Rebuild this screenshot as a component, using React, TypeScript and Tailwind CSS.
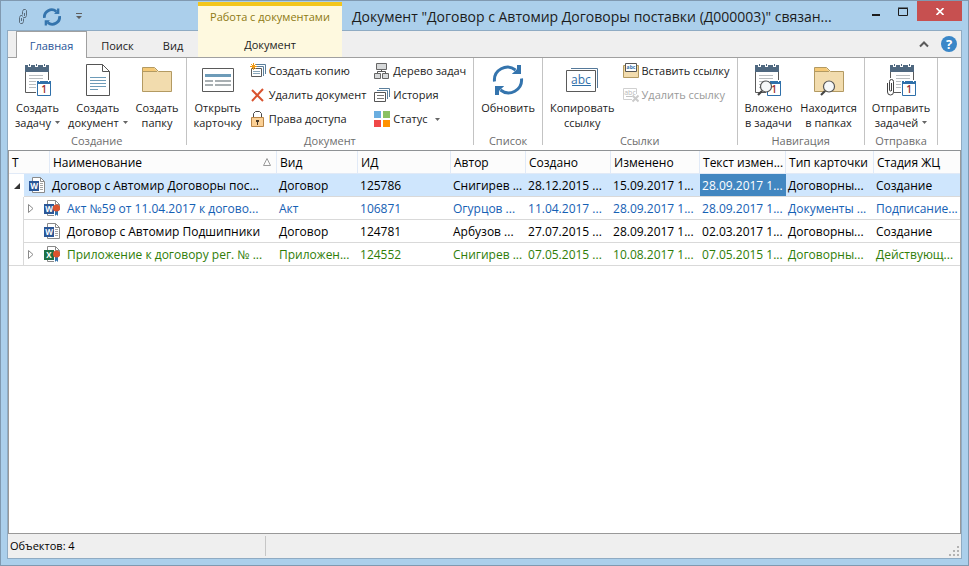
import React, { useState } from 'react';
import clsx from 'clsx';

interface DocumentRow {
  name: string;
  kind: string;
  id: string;
  author: string;
  created: string;
  changed: string;
  textChanged: string;
  cardType: string;
  stage: string;
  app: 'word' | 'excel';
  signed?: boolean;
  child?: boolean;
  expandable?: boolean;
  selected?: boolean;
  color: string;
}

const rows: DocumentRow[] = [
  {
    name: 'Договор с Автомир Договоры пос...', kind: 'Договор', id: '125786', author: 'Снигирев ...',
    created: '28.12.2015 ...', changed: '15.09.2017 1...', textChanged: '28.09.2017 1...',
    cardType: 'Договорны...', stage: 'Создание', app: 'word', selected: true, color: 'text-black',
  },
  {
    name: 'Акт №59 от 11.04.2017 к догово...', kind: 'Акт', id: '106871', author: 'Огурцов ...',
    created: '11.04.2017 ...', changed: '28.09.2017 1...', textChanged: '28.09.2017 1...',
    cardType: 'Документы ...', stage: 'Подписание...', app: 'word', signed: true, child: true,
    expandable: true, color: 'text-[#1560b4]',
  },
  {
    name: 'Договор с Автомир Подшипники', kind: 'Договор', id: '124781', author: 'Арбузов ...',
    created: '27.07.2015 ...', changed: '28.09.2017 1...', textChanged: '02.03.2017 1...',
    cardType: 'Договорны...', stage: 'Создание', app: 'word', child: true, color: 'text-black',
  },
  {
    name: 'Приложение к договору рег. № ...', kind: 'Приложен...', id: '124552', author: 'Снигирев ...',
    created: '07.05.2015 ...', changed: '10.08.2017 1...', textChanged: '07.05.2015 1...',
    cardType: 'Договорны...', stage: 'Действующ...', app: 'excel', signed: true, child: true,
    expandable: true, color: 'text-[#2f7d08]',
  },
];

const columns = ['Вид', 'ИД', 'Автор', 'Создано', 'Изменено', 'Текст измен...', 'Тип карточки', 'Стадия ЖЦ'];

/* ---------- Icons ---------- */

const RefreshIcon = ({ size, weight = 3 }: { size: number; weight?: number }) => (
  <svg width={size} height={size} viewBox="0 0 32 32">
    <path d="M2.500 17.500A13 13 0 0 1 23.500 6" fill="none" stroke="#3474ad" strokeWidth={weight} />
    <path d="M29.500 14.500A13 13 0 0 1 8.500 26" fill="none" stroke="#3474ad" strokeWidth={weight} />
    <path d="M25 1h4v9H20l5-4zM7 31H3v-9h9l-5 4z" fill="#3474ad" />
    <path d="M20 10l5-5 4 5zM12 22l-5 5-4-5z" fill="#3474ad" />
  </svg>
);

const LinkIcon = () => (
  <svg width="10" height="16" viewBox="0 0 10 16" fill="none" stroke="#5b6d7d">
    <path d="M3.500 5.500v-3l1-2h2l1 1v5l-1 2h-2l-1-1" />
    <path d="M3.500 6.500h-2l-1 2v5l1 1h2l1-2v-3M5.500 4v3M2.500 9v3" />
  </svg>
);

const SmallCalendar = () => (
  <g>
    <path d="M12.500 17.500h13v14h-13z" fill="#fff" stroke="#2f70aa" />
    <path d="M12 17h14v3H12z" fill="#2f70aa" />
    <path d="M14 17h1v1h-1zM23 17h1v1h-1z" fill="#fff" />
    <text x="19" y="29" fontSize="10" fontWeight="600" textAnchor="middle" fill="#a02c2c">1</text>
  </g>
);

const SheetBase = ({ lineStart }: { lineStart: number }) => (
  <g>
    <path d="M.5 6.500h23v22H.5z" fill="#fff" stroke="#5a5a5a" />
    <path d="M0 1h24v7H0z" fill="#4f6880" />
    <path d="M3 0h3v3H3zM10 0h3v3h-3zM18 0h3v3h-3z" fill="#fff" />
    <path d="M4 0h1v2H4zM11 0h1v2h-1zM19 0h1v2h-1z" fill="#4f6880" />
    <path d={`M${lineStart} 11.500h14M${lineStart} 14.500h14M${lineStart} 17.500h8M${lineStart} 20.500h7M${lineStart} 23.500h7`} stroke="#b9bdc0" />
    <path d="M11 16h15v16H11z" fill="#fff" />
    <SmallCalendar />
  </g>
);

const Magnifier = ({ x, y }: { x: number; y: number }) => (
  <g transform={`translate(${x} ${y})`}>
    <circle cx="9" cy="6.500" r="5.500" fill="#f6f8f9" stroke="#555" strokeWidth="1.200" />
    <path d="M5 11l-4 4" stroke="#444" strokeWidth="2.200" />
  </g>
);

const TaskIcon = () => (
  <svg width="26" height="32" viewBox="0 0 26 32">
    <SheetBase lineStart={4} />
  </svg>
);

const TaskSearchIcon = () => (
  <svg width="26" height="32" viewBox="0 0 26 32">
    <SheetBase lineStart={4} />
    <Magnifier x={2} y={16} />
  </svg>
);

const SendTaskIcon = () => (
  <svg width="30" height="32" viewBox="-4 0 30 32">
    <SheetBase lineStart={6} />
    <path d="M-4 14h8v18h-8z" fill="#fff" />
    <path d="M1.500 19v8M-2.500 19v9a3 3 0 0 0 6 0V17.500a2 2 0 0 0-4 0V26a1 1 0 0 0 2 0" fill="none" stroke="#444" />
  </svg>
);

const DocumentIcon = () => (
  <svg width="24" height="32" viewBox="0 0 24 32">
    <path d="M.5.500h16l7 7v24H.5z" fill="#fff" stroke="#555" />
    <path d="M16.500.500v7h7" fill="none" stroke="#555" />
    <path d="M4 13.500h16M4 16.500h16M4 19.500h16M4 22.500h16M4 25.500h8" stroke="#6d9bb8" />
  </svg>
);

const FolderIcon = ({ search }: { search?: boolean }) => (
  <svg width="30" height="32" viewBox="0 0 30 32">
    <path d="M.5 8V3.500h12l4 4h13v20H.5z" fill="#f2dcae" stroke="#b39a62" />
    <path d="M1 4h11l3 3.500H1z" fill="#f5c976" />
    <path d="M1 7.500h14" stroke="#b39a62" />
    {search && <Magnifier x={6} y={16} />}
  </svg>
);

const CardIcon = () => (
  <svg width="32" height="32" viewBox="0 0 32 32">
    <path d="M.5 4.500h31v23H.5z" fill="#fff" stroke="#5a5a5a" />
    <path d="M3 10h26v3H3z" fill="#6d9bb8" />
    <path d="M3 16h8v2H3zM13 16h16v2H13zM3 20h8v2H3zM13 20h16v2H13z" fill="#a8afb2" />
  </svg>
);

const CopyLinkIcon = () => (
  <svg width="32" height="32" viewBox="0 0 32 32">
    <path d="M5 4.500h26.500V24" fill="none" stroke="#55799a" />
    <path d="M.5 6.500h29v21H.5z" fill="#fff" stroke="#5a5a5a" />
    <text x="15" y="20" fontSize="12" textAnchor="middle" fill="#2f70aa">abc</text>
    <path d="M6 21.500h19" stroke="#2f70aa" />
  </svg>
);

const CopyIcon = () => (
  <svg width="16" height="16" viewBox="0 0 16 16">
    <path d="M6 1.500h9.500V11M5 3.500h8.500V13" fill="none" stroke="#5b7f9c" />
    <path d="M1.500 5.500h10v8h-10z" fill="#fff" stroke="#5a5a5a" />
    <path d="M3 8.500h7M3 10.500h7" stroke="#8aa7ba" />
    <path d="M3.500 0v7M0 3.500h7M1 1l5 5M6 1L1 6" stroke="#f39a12" />
  </svg>
);

const DeleteIcon = () => (
  <svg width="16" height="16" viewBox="0 0 16 16">
    <path d="M2 3l11 11M13 2L2 14" stroke="#d9532f" strokeWidth="2" />
  </svg>
);

const LockIcon = () => (
  <svg width="16" height="16" viewBox="0 0 16 16">
    <path d="M3.500 6V2.500l2-2h4l2 2V6" fill="none" stroke="#4a4a4a" />
    <path d="M1.500 6.500h12v9h-12z" fill="#fbd095" stroke="#b98547" />
    <path d="M6 9h3v2H8v3H7v-3H6z" fill="#4a3a28" />
  </svg>
);

const TreeIcon = () => (
  <svg width="16" height="16" viewBox="0 0 16 16">
    <path d="M7.500 7v2M3.500 11V8.500h8V11" fill="none" stroke="#555" />
    <path d="M2.500.500h10v6h-10zM.5 10.500h6v5h-6zM8.500 10.500h6v5h-6z" fill="#d7d9da" stroke="#666" />
  </svg>
);

const HistoryIcon = () => (
  <svg width="16" height="16" viewBox="0 0 16 16">
    <path d="M5 1.500h10.500V10M3 3.500h10.500V12" fill="none" stroke="#5b7f9c" />
    <path d="M.5 5.500h11v9H.5z" fill="#fff" stroke="#555" />
    <path d="M3 8.500h7M3 11.500h7" stroke="#777" />
  </svg>
);

const StatusIcon = () => (
  <svg width="16" height="16" viewBox="0 0 16 16">
    <path d="M0 0h7v7H0z" fill="#6aaee0" />
    <path d="M9 0h7v7H9z" fill="#8ac162" />
    <path d="M0 9h7v7H0z" fill="#f04848" />
    <path d="M9 9h7v7H9z" fill="#ff9100" />
  </svg>
);

const PasteLinkIcon = () => (
  <svg width="16" height="16" viewBox="0 0 16 16">
    <path d="M.5 2.500h15v12H.5z" fill="#f5d99b" stroke="#b39a62" />
    <path d="M2.500.500h11v8h-11z" fill="#fff" stroke="#555" />
    <text x="8" y="6" fontSize="5" fontWeight="bold" textAnchor="middle" fill="#2f70aa">abc</text>
    <path d="M1 9h14v5H1z" fill="#f2dcae" />
  </svg>
);

const DeleteLinkIcon = () => (
  <svg width="16" height="16" viewBox="0 0 16 16">
    <path d="M9 12.500H.5v-11h13V7" fill="none" stroke="#d0d0d0" />
    <text x="7" y="8" fontSize="7" textAnchor="middle" fill="#b8b8b8">abc</text>
    <path d="M3 9.500h6" stroke="#c4c4c4" />
    <path d="M9.500 8.500l6 6M15.500 8.500l-6 6" stroke="#cbcbcb" strokeWidth="2" />
  </svg>
);

const FileIcon = ({ app, signed }: { app: 'word' | 'excel'; signed?: boolean }) => {
  const color = app === 'word' ? '#2b5797' : '#1e7145';
  return (
    <svg width="16" height="16" viewBox="0 0 16 16" className="shrink-0">
      <path d="M3.500.500h8l4 4v11h-12z" fill="#fff" stroke="#8a8a8a" />
      <path d="M11.500.500v4h4" fill="none" stroke="#8a8a8a" />
      {!signed && <path d="M11 6.500h3M11 8.500h3M11 10.500h3M11 12.500h3" stroke="#a5a5a5" />}
      <path d="M0 4h10v10H0z" fill={color} />
      <text x="5" y="12" fontSize="8" fontWeight="bold" textAnchor="middle" fill="#fff">
        {app === 'word' ? 'W' : 'X'}
      </text>
      {signed && (
        <g>
          <path d="M10 10h6v6h-6z" fill="#fff" />
          <path d="M11 10v6l1.500-1.500L14 16v-6z" fill="#2f70aa" />
          <circle cx="12.500" cy="8" r="3.500" fill="#dc532c" />
        </g>
      )}
    </svg>
  );
};

const DropArrow = () => (
  <svg width="5" height="3" viewBox="0 0 5 3">
    <path d="M0 0h5L2.500 3z" fill="#666" />
  </svg>
);

/* ---------- Ribbon ---------- */

interface LargeButtonProps {
  icon: React.ReactNode;
  top: string;
  bottom?: string;
  menu?: boolean;
}

const LargeButton: React.FC<LargeButtonProps> = ({ icon, top, bottom, menu }) => (
  <button type="button" className="flex flex-col items-center pt-[6px] leading-[15px]">
    {icon}
    <span className="mt-1">{top}</span>
    {bottom && (
      <span className="flex items-center gap-1">
        {bottom}
        {menu && <DropArrow />}
      </span>
    )}
  </button>
);

interface SmallButtonProps {
  icon: React.ReactNode;
  label: string;
  menu?: boolean;
  disabled?: boolean;
}

const SmallButton: React.FC<SmallButtonProps> = ({ icon, label, menu, disabled }) => (
  <button type="button" disabled={disabled} className="flex h-6 items-center gap-[3px] disabled:text-[#9a9a9a]">
    {icon}
    <span>{label}</span>
    {menu && <span className="ml-1 flex"><DropArrow /></span>}
  </button>
);

interface RibbonGroupProps {
  title: string;
  children: React.ReactNode;
}

const RibbonGroup: React.FC<RibbonGroupProps> = ({ title, children }) => (
  <section className="flex h-[87px] shrink-0 flex-col border-r border-[#c3c3c3] px-[7px]">
    <div className="flex h-[75px] shrink-0 items-start justify-center gap-2">{children}</div>
    <h2 className="text-center leading-4 text-[#6d6d6d]">{title}</h2>
  </section>
);

const Ribbon = () => (
  <div className="flex h-[93px] shrink-0 whitespace-nowrap border-b border-[#8f9295] bg-white text-[11px] text-[#1c1c1c]">
    <RibbonGroup title="Создание">
      <LargeButton icon={<TaskIcon />} top="Создать" bottom="задачу" menu />
      <LargeButton icon={<DocumentIcon />} top="Создать" bottom="документ" menu />
      <LargeButton icon={<FolderIcon />} top="Создать" bottom="папку" />
    </RibbonGroup>
    <RibbonGroup title="Документ">
      <LargeButton icon={<CardIcon />} top="Открыть" bottom="карточку" />
      <div className="flex flex-col items-start pt-px">
        <SmallButton icon={<CopyIcon />} label="Создать копию" />
        <SmallButton icon={<DeleteIcon />} label="Удалить документ" />
        <SmallButton icon={<LockIcon />} label="Права доступа" />
      </div>
      <div className="flex flex-col items-start pt-px">
        <SmallButton icon={<TreeIcon />} label="Дерево задач" />
        <SmallButton icon={<HistoryIcon />} label="История" />
        <SmallButton icon={<StatusIcon />} label="Статус" menu />
      </div>
    </RibbonGroup>
    <RibbonGroup title="Список">
      <LargeButton icon={<RefreshIcon size={32} />} top="Обновить" />
    </RibbonGroup>
    <RibbonGroup title="Ссылки">
      <LargeButton icon={<CopyLinkIcon />} top="Копировать" bottom="ссылку" />
      <div className="flex flex-col items-start pt-px">
        <SmallButton icon={<PasteLinkIcon />} label="Вставить ссылку" />
        <SmallButton icon={<DeleteLinkIcon />} label="Удалить ссылку" disabled />
      </div>
    </RibbonGroup>
    <RibbonGroup title="Навигация">
      <LargeButton icon={<TaskSearchIcon />} top="Вложено" bottom="в задачи" />
      <LargeButton icon={<FolderIcon search />} top="Находится" bottom="в папках" />
    </RibbonGroup>
    <RibbonGroup title="Отправка">
      <LargeButton icon={<SendTaskIcon />} top="Отправить" bottom="задачей" menu />
    </RibbonGroup>
  </div>
);

/* ---------- Title bar ---------- */

const TitleBar = () => (
  <header className="flex h-[29px] shrink-0 whitespace-nowrap">
    <div className="flex w-[197px] shrink-0 items-center pl-[18px] pt-[2px]">
      <button type="button" aria-label="Ссылка"><LinkIcon /></button>
      <button type="button" aria-label="Обновить" className="ml-[14px]"><RefreshIcon size={18} weight={5} /></button>
      <button type="button" aria-label="Настройка панели" className="ml-[15px]">
        <svg width="6" height="7" viewBox="0 0 6 7">
          <path d="M0 0h6v1H0zM0 3h6L3 6z" fill="#5f5f5f" />
        </svg>
      </button>
    </div>
    <div className="mt-px w-36 shrink-0 border-t-4 border-[#f3c61c] bg-[#fef9df] text-center text-[11px] leading-[22px] text-[#8e7a14]">
      Работа с документами
    </div>
    <h1 className="min-w-0 flex-1 truncate pl-[10px] text-sm leading-[31px] text-[#1c1c1c]">
      Документ "Договор с Автомир Договоры поставки (Д000003)" связан...
    </h1>
    <div className="flex shrink-0 items-start pr-[6px]">
      <button type="button" aria-label="Свернуть" className="flex h-5 w-[26px] items-center justify-center pt-[3px]">
        <svg width="8" height="10"><path d="M0 6h8v2H0z" fill="#1c1c1c" /></svg>
      </button>
      <button type="button" aria-label="Развернуть" className="flex h-5 w-7 items-center justify-center">
        <svg width="10" height="9"><path d="M.5 1.500h9v7h-9zM0 1h10" fill="none" stroke="#1c1c1c" /></svg>
      </button>
      <button type="button" aria-label="Закрыть" className="flex h-5 w-[45px] items-center justify-center bg-[#c75050]">
        <svg width="8" height="7"><path d="M.5 0l7 7M7.500 0l-7 7" stroke="#fff" strokeWidth="1.600" /></svg>
      </button>
    </div>
  </header>
);

const TabRow = () => (
  <nav className="flex h-7 shrink-0 whitespace-nowrap bg-[#efefef] text-[11px] text-[#1c1c1c]">
    <div className="flex w-[190px] shrink-0 border-t border-[#8fabc3]">
      <span className="w-2 border-b border-[#a0a0a0]" />
      <button type="button" className="w-[71px] border-x border-t border-[#a0a0a0] bg-white pt-[2px] text-[#2a579a]">
        Главная
      </button>
      <button type="button" className="w-[61px] border-b border-[#a0a0a0] pt-1">Поиск</button>
      <button type="button" className="flex-1 border-b border-[#a0a0a0] pt-1">Вид</button>
    </div>
    <button type="button" className="w-36 shrink-0 border-b border-[#a0a0a0] bg-[#fef9df] pt-1">Документ</button>
    <div className="flex flex-1 items-center justify-end gap-3 border-b border-t border-b-[#a0a0a0] border-t-[#8fabc3] pr-1">
      <button type="button" aria-label="Свернуть ленту">
        <svg width="10" height="7"><path d="M1 5.500l4-4 4 4" fill="none" stroke="#5a5a5a" strokeWidth="2" /></svg>
      </button>
      <button type="button" aria-label="Справка">
        <svg width="16" height="16" viewBox="0 0 16 16">
          <circle cx="8" cy="8" r="8" fill="#3a87c8" />
          <text x="8" y="13" fontSize="13" fontWeight="bold" textAnchor="middle" fill="#fff">?</text>
        </svg>
      </button>
    </div>
  </nav>
);

/* ---------- Document list ---------- */

const DocumentTable = () => {
  const [selected, setSelected] = useState(rows.findIndex((row) => row.selected));

  return (
    <div className="min-h-0 flex-1 overflow-hidden border-x border-b border-[#999] bg-white">
      <table className="w-full table-fixed border-separate border-spacing-0 whitespace-nowrap text-xs leading-5 text-black">
        <colgroup>
          <col className="w-[15px]" />
          <col className="w-[26px]" />
          <col className="w-[227px]" />
          <col className="w-[81px]" />
          <col className="w-[93px]" />
          <col className="w-[75px]" />
          <col className="w-[85px]" />
          <col className="w-[89px]" />
          <col className="w-[86px]" />
          <col className="w-[88px]" />
          <col />
        </colgroup>
        <thead>
          <tr className="bg-[#fcfcfc] text-left">
            <th colSpan={2} className="border-b border-r border-[#e1eaf7] p-0 pl-[3px] pt-[2px] font-normal">Т</th>
            <th className="border-b border-r border-[#e1eaf7] p-0 px-[3px] pt-[2px] font-normal">
              <span className="flex items-center justify-between">
                Наименование
                <svg width="8" height="8" className="mb-[2px] mr-[2px]"><path d="M4 .5L7.500 7.500h-7z" fill="none" stroke="#9a9a9a" /></svg>
              </span>
            </th>
            {columns.map((title) => (
              <th key={title} className="overflow-hidden border-b border-r border-[#e1eaf7] p-0 pl-[3px] pt-[2px] font-normal last:border-r-0">
                {title}
              </th>
            ))}
          </tr>
        </thead>
        <tbody>
          {rows.map((row, index) => (
            <tr key={row.id} onClick={() => setSelected(index)} className={row.color}>
              <td className={clsx('h-[23px] border-[#d9d9d9] bg-white p-0', row.child && 'border-r', index === rows.length - 1 && 'border-b')}>
                {!row.child && (
                  <button type="button" aria-label="Свернуть" className="flex h-[22px] w-full items-center justify-center">
                    <svg width="6" height="6"><path d="M6 0v6H0z" fill="#333" /></svg>
                  </button>
                )}
              </td>
              <td colSpan={2} className={clsx('border-b border-[#d9d9d9] p-0', index === selected && 'bg-[#cfe6fd]')}>
                <div className={clsx('flex h-[22px] items-center gap-[7px]', row.child ? 'pl-1' : 'pl-[5px]')}>
                  {row.child && (
                    <span className="mr-px flex w-2 shrink-0">
                      {row.expandable && (
                        <button type="button" aria-label="Развернуть">
                          <svg width="6" height="9"><path d="M.5.500l4.500 4-4.500 4z" fill="none" stroke="#8a8a8a" /></svg>
                        </button>
                      )}
                    </span>
                  )}
                  <FileIcon app={row.app} signed={row.signed} />
                  <span className="pt-[2px]">{row.name}</span>
                </div>
              </td>
              {[row.kind, row.id, row.author, row.created, row.changed, row.textChanged, row.cardType, row.stage].map(
                (value, column) => (
                  <td
                    key={columns[column]}
                    className={clsx(
                      'overflow-hidden border-b border-[#d9d9d9] p-0 pl-[2px] pt-[2px]',
                      index === selected && (column === 5 ? 'bg-[#4287c1] text-white' : 'bg-[#cfe6fd]'),
                    )}
                  >
                    {value}
                  </td>
                ),
              )}
            </tr>
          ))}
        </tbody>
      </table>
    </div>
  );
};

const StatusBar = () => (
  <footer className="flex h-6 shrink-0 bg-[#efefef] py-[2px] text-[11px] leading-5 text-black">
    <div className="w-[258px] border-r border-[#c6c6c6] pl-[2px]">Объектов: 4</div>
    <div className="flex flex-1 items-end justify-end pr-[2px]">
      <svg width="10" height="10" viewBox="0 0 10 10">
        <path d="M8 0h2v2H8zM4 4h2v2H4zM8 4h2v2H8zM0 8h2v2H0zM4 8h2v2H4zM8 8h2v2H8z" fill="#b3b3b3" />
      </svg>
    </div>
  </footer>
);

const App: React.FC = () => (
  <div className="flex h-screen flex-col overflow-hidden border border-[#8099b0] bg-[#abcfeb] pb-[6px] font-['Open_Sans','Noto_Sans',sans-serif]">
    <TitleBar />
    <main className="mx-[6px] flex min-h-0 flex-1 flex-col border-x border-b border-[#8fabc3]">
      <TabRow />
      <Ribbon />
      <DocumentTable />
      <StatusBar />
    </main>
  </div>
);

export default App;
